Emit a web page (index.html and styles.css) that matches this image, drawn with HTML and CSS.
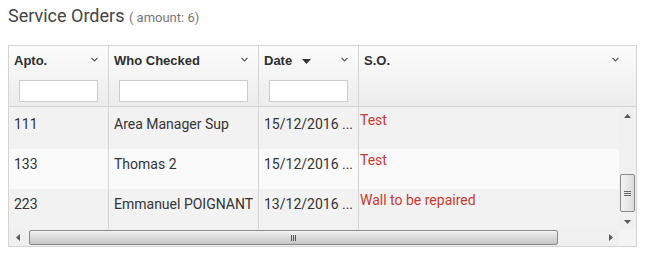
FILE: index.html
```html
<!DOCTYPE html>
<html lang="en">
<head>
    <meta charset="UTF-8">
    <title>Service Orders</title>
    <link rel="stylesheet" href="styles.css">
</head>
<body>
    <h1 class="title">Service Orders <small class="amount">( amount: 6)</small></h1>

    <div class="grid">
        <div class="grid-head">
            <div class="hcell">
                <div class="hcell-top">
                    <span class="hlabel">Apto.</span>
                    <svg class="chev" width="7" height="5" viewBox="0 0 7 5"><polyline points="0.5,0.8 3.5,3.8 6.5,0.8" /></svg>
                </div>
                <input class="filter" type="text">
            </div>
            <div class="hcell">
                <div class="hcell-top">
                    <span class="hlabel">Who Checked</span>
                    <svg class="chev" width="7" height="5" viewBox="0 0 7 5"><polyline points="0.5,0.8 3.5,3.8 6.5,0.8" /></svg>
                </div>
                <input class="filter" type="text">
            </div>
            <div class="hcell">
                <div class="hcell-top">
                    <span class="hlabel">Date <svg class="sort" width="9" height="5" viewBox="0 0 9 5"><polygon points="0,0 9,0 4.5,5" /></svg></span>
                    <svg class="chev" width="7" height="5" viewBox="0 0 7 5"><polyline points="0.5,0.8 3.5,3.8 6.5,0.8" /></svg>
                </div>
                <input class="filter" type="text">
            </div>
            <div class="hcell hcell-last">
                <div class="hcell-top">
                    <span class="hlabel">S.O.</span>
                    <svg class="chev" width="7" height="5" viewBox="0 0 7 5"><polyline points="0.5,0.8 3.5,3.8 6.5,0.8" /></svg>
                </div>
            </div>
        </div>

        <div class="grid-body">
            <div class="rows">
                <div class="row">
                    <div class="cell">111</div>
                    <div class="cell">Area Manager Sup</div>
                    <div class="cell">15/12/2016 ...</div>
                    <div class="cell cell-so">Test</div>
                </div>
                <div class="row">
                    <div class="cell">133</div>
                    <div class="cell">Thomas 2</div>
                    <div class="cell">15/12/2016 ...</div>
                    <div class="cell cell-so">Test</div>
                </div>
                <div class="row">
                    <div class="cell">223</div>
                    <div class="cell">Emmanuel POIGNANT</div>
                    <div class="cell">13/12/2016 ...</div>
                    <div class="cell cell-so">Wall to be repaired</div>
                </div>
            </div>
            <div class="vscroll">
                <svg class="arrow" width="7" height="4" viewBox="0 0 7 4"><polygon points="0,4 7,4 3.5,0" /></svg>
                <div class="vthumb">
                    <span></span><span></span><span></span>
                </div>
                <svg class="arrow" width="7" height="4" viewBox="0 0 7 4"><polygon points="0,0 7,0 3.5,4" /></svg>
            </div>
        </div>

        <div class="hscroll">
            <div class="hbtn">
                <svg width="4" height="7" viewBox="0 0 4 7"><polygon points="4,0 4,7 0,3.5" /></svg>
            </div>
            <div class="htrack">
                <div class="hthumb">
                    <span></span><span></span><span></span>
                </div>
            </div>
            <div class="hbtn">
                <svg width="4" height="7" viewBox="0 0 4 7"><polygon points="0,0 0,7 4,3.5" /></svg>
            </div>
            <div class="corner"></div>
        </div>
    </div>
</body>
</html>
```

FILE: styles.css
```css
body {
    margin: 0;
    padding: 5px 8px;
    font-family: Roboto, "Liberation Sans", sans-serif;
    color: #333;
    background: #fff;
}

.title {
    height: 21px;
    margin: 0 0 19px;
    font-size: 18px;
    font-weight: normal;
    color: #444;
    line-height: 21px;
}

.amount {
    font-size: 13px;
    line-height: 13px;
    color: #777;
}

.grid {
    width: 629px;
    box-sizing: border-box;
    border: 1px solid #d4d4d4;
}

/* cabecera */
.grid-head {
    display: grid;
    grid-template-columns: 100px 150px 100px 1fr;
    height: 60px;
    border-bottom: 1px solid #d4d4d4;
    background: linear-gradient(#fcfcfc, #ececec);
}

.hcell {
    padding: 7px 5px 0;
    border-right: 1px solid #d4d4d4;
    font-family: "Liberation Sans", Arial, sans-serif;
}

.hcell-last {
    border-right: none;
}

.hcell-top {
    display: flex;
    justify-content: space-between;
    align-items: flex-start;
    height: 15px;
}

.hlabel {
    font-size: 13px;
    font-weight: bold;
    line-height: 15px;
    color: #2e2e2e;
}

.sort {
    margin-left: 6px;
    vertical-align: 1px;
    fill: #333;
}

.chev {
    margin: 4px 5px 0 0;
    fill: none;
    stroke: #555;
    stroke-width: 1.2;
}

.hcell-last .chev {
    margin-right: 12px;
}

.filter {
    display: block;
    box-sizing: border-box;
    width: calc(100% - 10px);
    height: 22px;
    margin: 12px 0 0 5px;
    border: 1px solid #ccc;
    background: #fff;
    padding: 0;
}

/* cuerpo */
.grid-body {
    display: flex;
    height: 122px;
}

.rows {
    flex: 1;
    padding-top: 2px;
    background: #f2f2f2;
    overflow: hidden;
}

.row {
    display: grid;
    grid-template-columns: 100px 150px 100px 1fr;
    height: 40px;
    background: #f2f2f2;
}

.row:nth-child(even) {
    background: #fafafa;
}

.cell {
    padding: 7px 5px 0;
    border-right: 1px solid #d4d4d4;
    font-size: 14px;
    line-height: 16px;
    white-space: nowrap;
    overflow: hidden;
}

.rows .row:first-child .cell {
    margin-top: -2px;
    padding-top: 9px;
}

.rows .row:first-child .cell-so {
    padding-top: 5px;
}

.cell-so {
    padding: 3px 0 0 1px;
    border-right: none;
    color: #c63a2e;
}

/* barras de desplazamiento */
.vscroll {
    width: 17px;
    display: flex;
    flex-direction: column;
    align-items: center;
    background: #f0f0f0;
    padding-top: 7px;
    box-sizing: border-box;
}

.arrow {
    fill: #5a5a5a;
}

.vthumb {
    width: 15px;
    height: 38px;
    margin: 56px 0 8px;
    box-sizing: border-box;
    border: 1px solid #8a8a8a;
    border-radius: 2px;
    background: linear-gradient(90deg, #f4f4f4, #dcdcdc);
    display: flex;
    flex-direction: column;
    justify-content: center;
    align-items: center;
    gap: 1px;
}

.vthumb span {
    width: 7px;
    height: 1px;
    background: #666;
}

.hscroll {
    display: flex;
    height: 17px;
    background: #f0f0f0;
}

.hbtn {
    width: 17px;
    display: flex;
    align-items: center;
    justify-content: center;
    fill: #5a5a5a;
}

.htrack {
    flex: 1;
    padding: 1px 2px 0;
}

.hthumb {
    width: 529px;
    height: 15px;
    margin-left: 1px;
    box-sizing: border-box;
    border: 1px solid #8a8a8a;
    border-radius: 2px;
    background: linear-gradient(#f2f2f2, #c4c4c4);
    display: flex;
    justify-content: center;
    align-items: center;
    gap: 1px;
}

.hthumb span {
    width: 1px;
    height: 6px;
    background: #555;
}

.corner {
    width: 17px;
    background: #f4f4f4;
}
```
